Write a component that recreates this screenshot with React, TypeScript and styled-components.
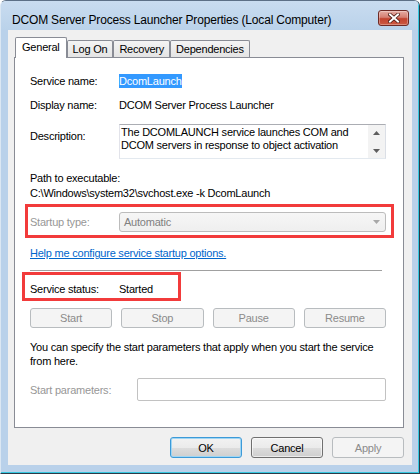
import styled, { createGlobalStyle } from "styled-components";

const GlobalStyle = createGlobalStyle`
  html, body {
    margin: 0;
    padding: 0;
    background: #fff;
  }
  body {
    font-family: "Liberation Sans", Arial, sans-serif;
    font-size: 11px;
    letter-spacing: -0.22px;
    color: #000;
    overflow: hidden;
  }
`;

const Window = styled.div`
  box-sizing: border-box;
  width: 420px;
  height: 474px;
  border-top: 1px solid #5d7087;
  border-left: 1px solid #dbe7f3;
  border-right: 1px solid #2b3a48;
  border-bottom: 1px solid #2b3a48;
  border-radius: 6px 6px 0 0;
  overflow: hidden;
`;

const WindowInner = styled.div`
  box-sizing: border-box;
  height: 100%;
  display: flex;
  flex-direction: column;
  background: #b9d1ea;
  border-right: 1px solid #36c8e0;
  border-bottom: 1px solid #36c8e0;
`;

const TitleBar = styled.div`
  height: 29px;
  flex-shrink: 0;
  display: flex;
  justify-content: space-between;
  align-items: flex-start;
  padding: 0 9px 0 11px;
  background: linear-gradient(#c9dcf0, #bad2ea);
`;

const Title = styled.div`
  margin-top: 11px;
  font-size: 12px;
  line-height: 16px;
  letter-spacing: -0.18px;
  white-space: nowrap;
`;

const CloseButton = styled.div`
  box-sizing: border-box;
  margin-top: 9px;
  width: 31px;
  height: 16px;
  display: flex;
  align-items: center;
  justify-content: center;
  border: 1px solid #6e2a25;
  border-radius: 3px;
  background: linear-gradient(#e6aca3 0%, #d57f72 45%, #c2432f 55%, #cc5a42 100%);
  box-shadow: inset 0 0 0 1px rgba(255, 255, 255, 0.3);
`;

const Frame = styled.div`
  flex: 1;
  display: flex;
  padding: 0 6px 7px 7px;
`;

const Client = styled.div`
  flex: 1;
  display: flex;
  flex-direction: column;
  background: #f0f0f0;
  padding-top: 7px;
`;

const TabStrip = styled.div`
  display: flex;
  align-items: flex-end;
  height: 20px;
  padding-left: 7px;
`;

const Tab = styled.div<{ $active?: boolean }>`
  box-sizing: border-box;
  position: relative;
  z-index: ${({ $active }) => ($active ? 1 : 0)};
  height: ${({ $active }) => ($active ? 21 : 17)}px;
  margin-bottom: ${({ $active }) => ($active ? -1 : 0)}px;
  padding: 0 ${({ $active }) => ($active ? 6 : 5)}px
    ${({ $active }) => ($active ? 2 : 0)}px;
  display: flex;
  align-items: center;
  border: 1px solid #898c95;
  border-bottom: none;
  border-radius: 2px 2px 0 0;
  background: ${({ $active }) =>
    $active ? "#fff" : "linear-gradient(#f4f4f4, #e4e4e4)"};
  white-space: nowrap;
`;

const TabPanel = styled.div`
  box-sizing: border-box;
  height: 371px;
  margin: 0 8px 0 6px;
  padding: 16px 17px 0 15px;
  display: flex;
  flex-direction: column;
  border: 1px solid #898c95;
  background: #fff;
  line-height: 14px;
`;

const FieldRow = styled.div<{ $gap?: number; $label?: number; $top?: boolean }>`
  display: grid;
  grid-template-columns: ${({ $label }) => $label ?? 89}px 1fr;
  align-items: ${({ $top }) => ($top ? "start" : "center")};
  margin-top: ${({ $gap }) => $gap ?? 0}px;
`;

const Label = styled.span<{ $disabled?: boolean; $offset?: number }>`
  color: ${({ $disabled }) => ($disabled ? "#979797" : "#000")};
  margin-top: ${({ $offset }) => $offset ?? 0}px;
  white-space: nowrap;
`;

const Selected = styled.span`
  justify-self: start;
  background: #3399ff;
  color: #fff;
`;

const DescriptionBox = styled.div`
  box-sizing: border-box;
  height: 35px;
  display: flex;
  border: 1px solid;
  border-color: #abadb3 #dbdfe6 #e3e9ef #e2e3ea;
`;

const DescriptionText = styled.div`
  flex: 1;
  padding: 1px 0 0 1px;
  line-height: 13px;
  white-space: nowrap;
  overflow: hidden;
`;

const ScrollBar = styled.div`
  width: 17px;
  display: flex;
  flex-direction: column;
  justify-content: space-between;
  align-items: center;
  padding: 6px 0 5px;
  background: #f3f3f3;
`;

const TextBlock = styled.div<{ $gap?: number; $lineHeight?: number }>`
  margin-top: ${({ $gap }) => $gap ?? 0}px;
  line-height: ${({ $lineHeight }) => $lineHeight ?? 14}px;
  white-space: nowrap;
`;

const Highlight = styled.div<{
  $gap: number;
  $left: number;
  $right: number;
  $pad: string;
  $width?: number;
}>`
  box-sizing: border-box;
  margin: ${({ $gap }) => $gap}px ${({ $right }) => -$right}px 0
    ${({ $left }) => -$left}px;
  padding: ${({ $pad }) => $pad};
  width: ${({ $width }) => ($width ? `${$width}px` : "auto")};
  border: 3px solid #f23b3b;
`;

const ComboBox = styled.div`
  box-sizing: border-box;
  height: 20px;
  display: flex;
  align-items: center;
  justify-content: space-between;
  padding: 0 5px 0 4px;
  border: 1px solid #bcbcbc;
  border-radius: 3px;
  background: linear-gradient(#f6f6f6, #efefef);
  color: #7f7f7f;
`;

const HelpLink = styled.a`
  margin-top: 8px;
  align-self: flex-start;
  color: #0066cc;
  text-decoration: underline;
  white-space: nowrap;
`;

const Separator = styled.div`
  height: 1px;
  margin: 10px 4px 0 0;
  background: #a0a0a0;
`;

const ServiceButtons = styled.div`
  display: grid;
  grid-template-columns: repeat(4, 1fr);
  gap: 9px;
  margin-top: 7px;
`;

const PushButton = styled.div<{ $disabled?: boolean; $default?: boolean; $width?: number; $height?: number }>`
  box-sizing: border-box;
  width: ${({ $width }) => ($width ? `${$width}px` : "auto")};
  height: ${({ $height }) => $height ?? 20}px;
  display: flex;
  align-items: center;
  justify-content: center;
  border: 1px solid
    ${({ $disabled, $default }) =>
      $disabled ? "#b8bcbf" : $default ? "#3c9ad8" : "#707070"};
  border-radius: 3px;
  color: ${({ $disabled }) => ($disabled ? "#8b8b8b" : "#000")};
  background: ${({ $disabled }) =>
    $disabled
      ? "#f4f4f4"
      : "linear-gradient(#f2f2f2 0%, #ebebeb 50%, #dddddd 51%, #cfcfcf 100%)"};
  box-shadow: ${({ $default, $disabled }) =>
    $disabled
      ? "none"
      : $default
      ? "inset 0 0 0 1px #9fd6f4"
      : "inset 0 0 0 1px rgba(255,255,255,0.6)"};
`;

const ParamInput = styled.div`
  box-sizing: border-box;
  height: 23px;
  border: 1px solid #c2c2c2;
  border-radius: 2px;
  background: #fff;
`;

const Footer = styled.div`
  display: flex;
  justify-content: flex-end;
  gap: 9px;
  padding: 9px 8px 0 0;
`;

function Arrow({ up, color }: { up?: boolean; color: string }) {
  return (
    <svg width="7" height="4" viewBox="0 0 7 4">
      <path d={up ? "M0 4 L3.5 0 L7 4 Z" : "M0 0 L7 0 L3.5 4 Z"} fill={color} />
    </svg>
  );
}

export default function App() {
  return (
    <>
      <GlobalStyle />
      <Window>
        <WindowInner>
          <TitleBar>
            <Title>DCOM Server Process Launcher Properties (Local Computer)</Title>
            <CloseButton>
              <svg width="12" height="10" viewBox="0 0 12 10">
                <path d="M2 1.5 L10 8.5 M10 1.5 L2 8.5" stroke="#4a1a14" strokeWidth="3.6" strokeLinecap="square" />
                <path d="M2 1.5 L10 8.5 M10 1.5 L2 8.5" stroke="#fff" strokeWidth="2" strokeLinecap="square" />
              </svg>
            </CloseButton>
          </TitleBar>
          <Frame>
            <Client>
              <TabStrip>
                <Tab $active>General</Tab>
                <Tab>Log On</Tab>
                <Tab>Recovery</Tab>
                <Tab>Dependencies</Tab>
              </TabStrip>
              <TabPanel>
                <FieldRow>
                  <Label>Service name:</Label>
                  <Selected>DcomLaunch</Selected>
                </FieldRow>
                <FieldRow $gap={10}>
                  <Label>Display name:</Label>
                  <span>DCOM Server Process Launcher</span>
                </FieldRow>
                <FieldRow $gap={12} $top>
                  <Label $offset={5}>Description:</Label>
                  <DescriptionBox>
                    <DescriptionText>
                      The DCOMLAUNCH service launches COM and
                      <br />
                      DCOM servers in response to object activation
                    </DescriptionText>
                    <ScrollBar>
                      <Arrow up color="#5e5e5e" />
                      <Arrow color="#5e5e5e" />
                    </ScrollBar>
                  </DescriptionBox>
                </FieldRow>
                <TextBlock $gap={12} $lineHeight={15}>
                  Path to executable:
                  <br />
                  C:\Windows\system32\svchost.exe -k DcomLaunch
                </TextBlock>
                <Highlight $gap={3} $left={5} $right={8} $pad="5px 5px 3px 2px">
                  <FieldRow>
                    <Label $disabled>Startup type:</Label>
                    <ComboBox>
                      <span>Automatic</span>
                      <Arrow color="#a8a8a8" />
                    </ComboBox>
                  </FieldRow>
                </Highlight>
                <HelpLink>Help me configure service startup options.</HelpLink>
                <Separator />
                <Highlight $gap={1} $left={8} $right={0} $pad="7px 0 2px 5px" $width={159}>
                  <FieldRow>
                    <Label>Service status:</Label>
                    <span>Started</span>
                  </FieldRow>
                </Highlight>
                <ServiceButtons>
                  <PushButton $disabled>Start</PushButton>
                  <PushButton $disabled>Stop</PushButton>
                  <PushButton $disabled>Pause</PushButton>
                  <PushButton $disabled>Resume</PushButton>
                </ServiceButtons>
                <TextBlock $gap={12}>
                  You can specify the start parameters that apply when you start the service
                  <br />
                  from here.
                </TextBlock>
                <FieldRow $gap={10} $label={107}>
                  <Label $disabled>Start parameters:</Label>
                  <ParamInput />
                </FieldRow>
              </TabPanel>
              <Footer>
                <PushButton $default $width={72} $height={21}>OK</PushButton>
                <PushButton $width={72} $height={21}>Cancel</PushButton>
                <PushButton $disabled $width={72} $height={21}>Apply</PushButton>
              </Footer>
            </Client>
          </Frame>
        </WindowInner>
      </Window>
    </>
  );
}
